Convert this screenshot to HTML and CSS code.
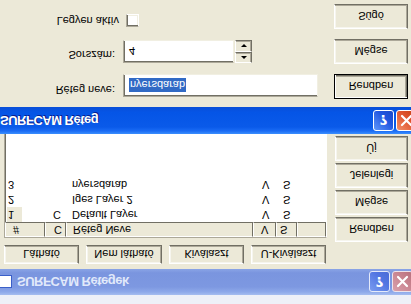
FILE: index.html
```html
<!DOCTYPE html>
<html lang="hu">
<head>
<meta charset="utf-8">
<title>SURFCAM Rétegek</title>
<link rel="stylesheet" href="styles.css">
</head>
<body>
<div class="screen">
  <div class="strip"></div>
  <section class="win back">
    <div class="title inactive">
      <span class="app-icon"></span>
      <span class="title-text">SURFCAM Rétegek</span>
      <span class="tb-btns">
        <span class="tb help">?</span>
        <span class="tb close"><svg width="19" height="19" viewBox="0 0 19 19"><path d="M5 5 L14 14 M14 5 L5 14" stroke="#fff" stroke-width="2.2" stroke-linecap="round"/></svg></span>
      </span>
    </div>
    <div class="back-body">
      <div class="btn-row">
        <button class="btn w75">Látható</button>
        <button class="btn w76">Nem látható</button>
        <button class="btn w75">Kiválaszt</button>
        <button class="btn w75">U-Kiválaszt</button>
      </div>
      <div class="list-area">
        <div class="grid">
          <div class="hd p7">#</div>
          <div class="hd p8">C</div>
          <div class="hd p6">Réteg Neve</div>
          <div class="hd p7">V</div>
          <div class="hd p3">S</div>
          <div class="hd"></div>

          <div class="cell p2"><span class="focus">1</span></div>
          <div class="cell p8">C</div>
          <div class="cell p6">Default Layer</div>
          <div class="cell p9">V</div>
          <div class="cell p7">S</div>
          <div class="cell"></div>

          <div class="cell p3">2</div>
          <div class="cell p8"></div>
          <div class="cell p6">Iges Layer 2</div>
          <div class="cell p9">V</div>
          <div class="cell p7">S</div>
          <div class="cell"></div>

          <div class="cell p3">3</div>
          <div class="cell p8"></div>
          <div class="cell p6">nyersdarab</div>
          <div class="cell p9">V</div>
          <div class="cell p7">S</div>
          <div class="cell"></div>
        </div>
        <div class="side-btns">
          <button class="btn side">Rendben</button>
          <button class="btn side">Mégse</button>
          <button class="btn side">Jelenlegi</button>
          <button class="btn side">Új</button>
        </div>
      </div>
    </div>
  </section>

  <section class="win front">
    <div class="title active">
      <span class="title-text">SURFCAM Réteg</span>
      <span class="tb-btns">
        <span class="tb help">?</span>
        <span class="tb close"><svg width="19" height="19" viewBox="0 0 19 19"><path d="M5 5 L14 14 M14 5 L5 14" stroke="#fff" stroke-width="2.2" stroke-linecap="round"/></svg></span>
      </span>
    </div>
    <div class="front-body">
      <div class="frow">
        <label class="lbl">Réteg neve:</label>
        <div class="ctrl">
          <div class="input name"><span class="sel">nyersdarab</span></div>
        </div>
        <button class="btn dlg default">Rendben</button>
      </div>
      <div class="frow">
        <label class="lbl">Sorszám:</label>
        <div class="ctrl">
          <div class="input num">4</div>
          <div class="spin">
            <span class="spin-btn"><span class="tri up"></span></span>
            <span class="spin-btn"><span class="tri down"></span></span>
          </div>
        </div>
        <button class="btn dlg">Mégse</button>
      </div>
      <div class="frow">
        <label class="lbl wide">Legyen aktív</label>
        <div class="ctrl">
          <span class="check"></span>
        </div>
        <button class="btn dlg">Súgó</button>
      </div>
    </div>
  </section>
</div>
</body>
</html>
```

FILE: styles.css
```css
* { box-sizing: border-box; }
html, body { margin: 0; padding: 0; background: #ece9d8; }
body { font-family: "Liberation Sans", Arial, sans-serif; font-size: 11px; color: #000; }

.screen {
  position: relative;
  width: 411px;
  height: 304px;
  overflow: hidden;
  background: #ece9d8;
  transform: scaleY(-1);
}

.strip { height: 9px; background: #eef0f8; }

/* title bars */
.title {
  display: flex;
  align-items: center;
  font-weight: bold;
  font-size: 13px;
  letter-spacing: -0.5px;
  white-space: nowrap;
}
.title.inactive {
  height: 26px;
  background: linear-gradient(#a5bdf0 0, #8ea9ea 3px, #7d98e1 8px, #7a95df 85%, #8aa4e6 100%);
  color: #e1e9fa;
}
.title.active {
  height: 27px;
  background: linear-gradient(#3c8ffd 0, #1a6cf5 3px, #0a5ae9 7px, #0555e6 80%, #0a4fd8 100%);
  color: #fff;
  text-shadow: 1px 1px #0a1e8c;
  padding-left: 4px;
}
.app-icon {
  width: 13px;
  height: 13px;
  margin-left: -1px;
  background: #fff;
  border: 1px solid #3a5fc8;
  border-left: none;
}
.inactive .title-text { margin-left: 5px; }
.tb-btns { display: flex; gap: 2px; margin-left: auto; }
.back .tb-btns { margin-right: -2px; }
.front .tb-btns { margin-right: 11px; }
.tb {
  width: 21px;
  height: 21px;
  border: 1px solid #fff;
  border-radius: 3px;
  display: flex;
  align-items: center;
  justify-content: center;
  color: #fff;
  font-family: "DejaVu Sans", sans-serif;
  font-size: 14px;
  font-weight: bold;
  letter-spacing: 0;
  text-shadow: none;
}
.active .help { background: linear-gradient(135deg, #5d96fb, #2156e0 60%, #1c48c8); }
.active .close { background: linear-gradient(135deg, #f2906a, #e0552e 55%, #c63e14); }
.inactive .help { background: linear-gradient(135deg, #7a9cf0, #5276e2 60%, #4a6bd6); border-color: #e4eafa; }
.inactive .close { background: linear-gradient(135deg, #d9a0ac, #c8838f 60%, #b8707c); border-color: #eee3ea; }

/* buttons */
.btn {
  font-family: "Liberation Sans", Arial, sans-serif;
  font-size: 11px;
  color: #000;
  background: #ece9d8;
  border: 1px solid;
  border-color: #fff #716f64 #716f64 #fff;
  box-shadow: inset -1px -1px #aca899, inset 1px 1px #f6f5ee;
  padding: 0;
  margin: 0;
}
.btn.default {
  border: 1px solid #000;
  box-shadow: inset 1px 1px #fff, inset -1px -1px #716f64, inset -2px -2px #aca899;
}

.back-body { padding-top: 5px; }
.btn-row { display: flex; gap: 7px; padding-left: 4px; }
.btn-row .btn { height: 19px; }
.w75 { width: 75px; }
.w76 { width: 76px; }

.list-area { display: flex; align-items: flex-start; margin-top: 3px; }
.grid {
  margin-left: 4px;
  margin-top: 4px;
  width: 323px;
  height: 120px;
  background: #fff;
  border: 1px solid;
  border-color: #aca899 #fff #fff #aca899;
  box-shadow: inset 1px 1px #716f64;
  display: grid;
  grid-template-columns: 40px 21px 187px 23px 21px 1fr;
  grid-auto-rows: 15px;
  align-content: start;
}
.hd {
  background: #ece9d8;
  border: 1px solid;
  border-color: #fff #716f64 #716f64 #fff;
  line-height: 13px;
  white-space: nowrap;
}
.cell { line-height: 15px; white-space: nowrap; }
.p2 { padding-left: 2px; }
.p3 { padding-left: 3px; }
.p6 { padding-left: 6px; }
.p7 { padding-left: 7px; }
.p8 { padding-left: 8px; }
.p9 { padding-left: 9px; }
.focus {
  display: inline-block;
  width: 15px;
  height: 15px;
  padding-left: 1px;
  background: #ece9d8;
}

.side-btns {
  display: flex;
  flex-direction: column;
  gap: 2px;
  margin-left: 8px;
}
.btn.side { width: 73px; height: 25px; }

/* front dialog */
.win.front {
  position: absolute;
  top: 170px;
  left: -4px;
  width: 432px;
  height: 140px;
  background: #ece9d8;
}
.front-body {
  padding-top: 8px;
  display: flex;
  flex-direction: column;
  gap: 10px;
}
.frow { display: flex; align-items: flex-start; height: 25px; }
.lbl {
  width: 119px;
  text-align: right;
  padding-top: 3px;
  white-space: nowrap;
}
.lbl.wide { width: 123px; margin-right: -4px; padding-top: 2px; }
.ctrl {
  width: 203px;
  margin-left: 8px;
  display: flex;
  align-items: flex-start;
}
.btn.dlg { width: 74px; height: 25px; margin-left: 8px; }

.input {
  height: 23px;
  background: #fff;
  border: 1px solid;
  border-color: #aca899 #f1efe2 #f1efe2 #aca899;
  box-shadow: inset 1px 1px #716f64;
  padding-left: 5px;
  display: flex;
  align-items: center;
}
.input.name { width: 195px; margin-top: 2px; }
.input.num { width: 111px; margin-top: 1px; }
.sel {
  background: #316ac5;
  color: #fff;
  line-height: 14px;
  padding: 0 1px;
}
.spin {
  display: flex;
  flex-direction: column;
  margin-left: 1px;
  margin-top: 1px;
}
.spin-btn {
  width: 17px;
  height: 11px;
  background: #ece9d8;
  border: 1px solid;
  border-color: #fff #716f64 #716f64 #fff;
  box-shadow: inset -1px -1px #aca899;
  display: flex;
  align-items: center;
  justify-content: center;
}
.spin-btn + .spin-btn { height: 12px; }
.tri { width: 0; height: 0; border-left: 3px solid transparent; border-right: 3px solid transparent; }
.tri.up { border-bottom: 3px solid #000; }
.tri.down { border-top: 3px solid #000; }

.check {
  width: 13px;
  height: 13px;
  margin-top: 2px;
  margin-left: 3px;
  background: #fff;
  border: 1px solid;
  border-color: #aca899 #fff #fff #aca899;
  box-shadow: inset 1px 1px #716f64, inset -1px -1px #f1efe2;
}
```
